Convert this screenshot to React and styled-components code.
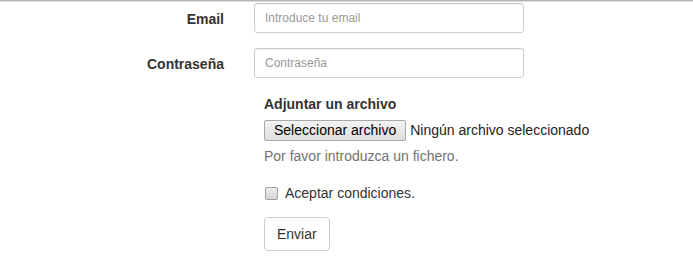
import React from 'react';
import styled, { createGlobalStyle } from 'styled-components';

const GlobalStyle = createGlobalStyle`
  html, body {
    margin: 0;
    padding: 0;
    background: #fff;
  }
  body {
    font-family: "Liberation Sans", Arial, sans-serif;
    font-size: 14px;
    line-height: 20px;
    color: #333;
  }
`;

const Page = styled.div`
  border-top: 1px solid #b4b4b4;
  box-shadow: inset 0 1px 0 #dcdcdc;
  padding-top: 2px;
  width: 693px;
  height: 275px;
`;

const Form = styled.form`
  display: flex;
  flex-direction: column;
`;

const Group = styled.div`
  display: grid;
  grid-template-columns: 239px 285px;
  margin-bottom: 15px;
`;

const Label = styled.label`
  text-align: right;
  font-weight: bold;
  padding-right: 15px;
  padding-top: 6px;
`;

const Field = styled.div`
  padding-left: 15px;
`;

const Input = styled.input`
  box-sizing: border-box;
  width: 270px;
  height: 30px;
  padding: 5px 10px;
  font-family: "Liberation Sans", Arial, sans-serif;
  font-size: 12px;
  color: #555;
  border: 1px solid #ccc;
  border-radius: 3px;
  box-shadow: inset 0 1px 1px rgba(0, 0, 0, 0.075);
  outline: none;
  &::placeholder {
    color: #999;
  }
`;

const Block = styled.div`
  margin-left: 264px;
  margin-top: ${p => p.$top || 0}px;
  margin-bottom: ${p => p.$bottom || 15}px;
  display: flex;
  flex-direction: column;
  align-items: flex-start;
`;

const BlockLabel = styled.div`
  font-weight: bold;
  margin-top: 1px;
  margin-bottom: 5px;
`;

const FileRow = styled.div`
  display: flex;
  align-items: center;
  gap: 4px;
  height: 22px;
`;

const FileButton = styled.button`
  font-family: "Liberation Sans", Arial, sans-serif;
  font-size: 14px;
  color: #000;
  height: 21px;
  padding: 0 9px;
  border: 1px solid #a9a9a9;
  border-radius: 2px;
  background: linear-gradient(#f3f3f3, #dedede);
  line-height: 19px;
`;

const FileName = styled.span`
  color: #222;
`;

const Help = styled.p`
  margin: 5px 0 0;
  color: #737373;
`;

const CheckLabel = styled.label`
  display: flex;
  align-items: center;
  gap: 7px;
  height: 20px;
  padding-left: 1px;
`;

const Box = styled.span`
  box-sizing: border-box;
  width: 13px;
  height: 13px;
  margin-top: 1px;
  border: 1px solid #a0a0a0;
  border-radius: 2px;
  background: linear-gradient(#ececec, #d6d6d6);
`;

const Submit = styled.button`
  font-family: "Liberation Sans", Arial, sans-serif;
  font-size: 14px;
  line-height: 20px;
  color: #333;
  background: #fff;
  border: 1px solid #ccc;
  border-radius: 4px;
  padding: 6px 12px;
  height: 34px;
`;

export default function App() {
  return (
    <Page>
      <GlobalStyle />
      <Form>
        <Group>
          <Label>Email</Label>
          <Field><Input type="email" placeholder="Introduce tu email" /></Field>
        </Group>
        <Group>
          <Label>Contraseña</Label>
          <Field><Input type="password" placeholder="Contraseña" /></Field>
        </Group>
        <Block>
          <BlockLabel>Adjuntar un archivo</BlockLabel>
          <FileRow>
            <FileButton type="button">Seleccionar archivo</FileButton>
            <FileName>Ningún archivo seleccionado</FileName>
          </FileRow>
          <Help>Por favor introduzca un fichero.</Help>
        </Block>
        <Block $top={2} $bottom={14}>
          <CheckLabel>
            <Box />
            Aceptar condiciones.
          </CheckLabel>
        </Block>
        <Block>
          <Submit type="button">Enviar</Submit>
        </Block>
      </Form>
    </Page>
  );
}
